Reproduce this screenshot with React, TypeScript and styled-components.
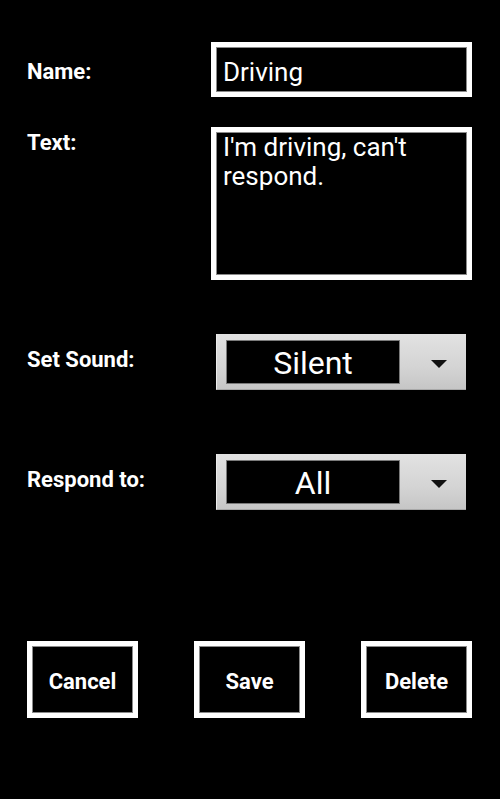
import React from "react";
import styled, { createGlobalStyle } from "styled-components";

const Global = createGlobalStyle`
  html, body { margin: 0; padding: 0; background: #000; }
  body { font-family: Roboto, "Liberation Sans", sans-serif; color: #fff; }
`;

const Page = styled.div`
  width: 500px;
  height: 799px;
  box-sizing: border-box;
  padding: 42px 28px 0 27px;
  background: #000;
  display: flex;
  flex-direction: column;
`;

const Row = styled.div<{ $top?: number }>`
  display: grid;
  grid-template-columns: 184px 1fr;
  align-items: start;
  margin-top: ${(p) => p.$top ?? 0}px;
`;

const Label = styled.div<{ $offset: number }>`
  margin-top: ${(p) => p.$offset}px;
  font-weight: 700;
  font-size: 22px;
  line-height: normal;
  color: #fff;
`;

const Box = styled.div`
  box-sizing: border-box;
  width: 261px;
  border: 5px solid #fff;
  box-shadow: inset 0 0 0 1px #8a8a8a;
  background: #000;
  color: #fff;
  font-size: 26px;
`;

const NameBox = styled(Box)`
  height: 55px;
  display: flex;
  align-items: center;
  padding: 4px 6px 0 7px;
`;

const TextBox = styled(Box)`
  height: 153px;
  padding: 1px 6px 0 7px;
  line-height: 29px;
`;

const Select = styled.div`
  box-sizing: border-box;
  margin-left: 5px;
  width: 250px;
  height: 56px;
  display: flex;
  align-items: center;
  background: linear-gradient(to bottom, #e2e2e2 0%, #d4d4d4 60%, #c6c6c6 100%);
  border-left: 1px solid #ececec;
  border-bottom: 1px solid #a8a8a8;
`;

const SelectValue = styled.div`
  box-sizing: border-box;
  margin-left: 9px;
  width: 174px;
  height: 44px;
  background: #000;
  border: 1px solid #7a7a7a;
  display: flex;
  align-items: center;
  justify-content: center;
  font-size: 32px;
  color: #fff;
  padding-top: 2px;
`;

const ArrowArea = styled.div`
  flex: 1;
  display: flex;
  justify-content: flex-end;
  padding: 4px 19px 0 0;
`;

const Caret = styled.div`
  width: 0;
  height: 0;
  border-left: 8px solid transparent;
  border-right: 8px solid transparent;
  border-top: 8px solid #111;
`;

const ButtonBar = styled.div`
  display: flex;
  gap: 56px;
  margin-top: 131px;
`;

const Button = styled.button`
  box-sizing: border-box;
  width: 111px;
  height: 77px;
  background: #000;
  border: 5px solid #fff;
  box-shadow: inset 0 0 0 1px #8a8a8a;
  color: #fff;
  font-family: Roboto, "Liberation Sans", sans-serif;
  font-weight: 700;
  font-size: 22px;
  padding: 3px 0 0 0;
  display: flex;
  align-items: center;
  justify-content: center;
`;

function Dropdown({ value }: { value: string }) {
  return (
    <Select>
      <SelectValue>{value}</SelectValue>
      <ArrowArea>
        <Caret />
      </ArrowArea>
    </Select>
  );
}

export default function App() {
  return (
    <>
      <Global />
      <Page>
        <Row>
          <Label $offset={17}>Name:</Label>
          <NameBox>Driving</NameBox>
        </Row>
        <Row $top={30}>
          <Label $offset={3}>Text:</Label>
          <TextBox>I'm driving, can't respond.</TextBox>
        </Row>
        <Row $top={54}>
          <Label $offset={13}>Set Sound:</Label>
          <Dropdown value="Silent" />
        </Row>
        <Row $top={64}>
          <Label $offset={13}>Respond to:</Label>
          <Dropdown value="All" />
        </Row>
        <ButtonBar>
          <Button>Cancel</Button>
          <Button>Save</Button>
          <Button>Delete</Button>
        </ButtonBar>
      </Page>
    </>
  );
}
